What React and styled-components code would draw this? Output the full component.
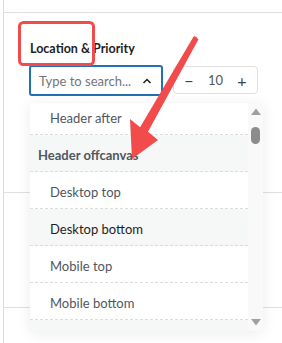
import React from 'react';
import styled, { createGlobalStyle } from 'styled-components';

const Global = createGlobalStyle`
  html, body {
    margin: 0;
    padding: 0;
    background: #fff;
  }
  body {
    font-family: Lato, "Noto Sans", Arial, sans-serif;
    -webkit-font-smoothing: antialiased;
  }
`;

const options = [
  { id: 1, label: 'Header after' },
  { id: 2, label: 'Header offcanvas', group: true },
  { id: 3, label: 'Desktop top' },
  { id: 4, label: 'Desktop bottom', hover: true },
  { id: 5, label: 'Mobile top' },
  { id: 6, label: 'Mobile bottom' },
];

const App = () => {
  return (
    <Frame>
      <Global />
      <Sidebar>
        <TopStrip />
        <Section $height={180}>
          <Label>Location &amp; Priority</Label>
          <Controls>
            <SearchSelect>
              <Placeholder>Type to search...</Placeholder>
              <svg width="10" height="6" viewBox="0 0 10 6">
                <path d="M1.5 5 L5 1.5 L8.5 5" fill="none" stroke="#1e1e1e" strokeWidth="1.5" />
              </svg>
            </SearchSelect>
            <Stepper>
              <StepButton>−</StepButton>
              <StepValue>10</StepValue>
              <StepButton>+</StepButton>
            </Stepper>
          </Controls>
        </Section>
        <Section $height={115} />
        <Section />
      </Sidebar>

      <Dropdown>
        <OptionList>
          <Scroller>
            {options.map((opt) => (
              <Option key={opt.id} $group={opt.group} $hover={opt.hover}>
                {opt.label}
              </Option>
            ))}
          </Scroller>
        </OptionList>
        <ScrollTrack>
          <svg width="10" height="7" viewBox="0 0 10 7">
            <path d="M0 7 L5 0.5 L10 7 Z" fill="#a0a0a0" />
          </svg>
          <Thumb />
          <TrackSpacer />
          <svg width="10" height="7" viewBox="0 0 10 7">
            <path d="M0 0 L10 0 L5 6.5 Z" fill="#a0a0a0" />
          </svg>
        </ScrollTrack>
      </Dropdown>

      <Annotation width="282" height="343" viewBox="0 0 282 343">
        <rect x="19.5" y="22.5" width="74" height="42" rx="4" fill="none" stroke="#f24b4b" strokeWidth="3" />
        <path
          d="M193.6 36.4 Q196 35.5 198.4 39.6 L148 131.7 L158 140 L132 159 L130 119 L140.1 127.3 Z"
          fill="#f24b4b"
        />
      </Annotation>
    </Frame>
  );
};

export default App;

const Frame = styled.div`
  position: relative;
  width: 282px;
  height: 343px;
  overflow: hidden;
  background: #fff;
`;

const Sidebar = styled.div`
  margin-left: 3px;
  height: 100%;
  border-left: 1px solid #dcdcde;
  display: flex;
  flex-direction: column;
`;

const TopStrip = styled.div`
  height: 12px;
  flex-shrink: 0;
  border-bottom: 1px solid #e0e0e0;
`;

const Section = styled.div`
  box-sizing: border-box;
  flex: ${(p) => (p.$height ? `0 0 ${p.$height}px` : '1')};
  padding: 28px 0 0 25px;
  border-bottom: ${(p) => (p.$height ? '1px solid #e0e0e0' : 'none')};
`;

const Label = styled.div`
  font-size: 12.5px;
  line-height: 16px;
  font-weight: 700;
  color: #1e1e1e;
  padding-left: 1px;
  margin-bottom: 8px;
`;

const Controls = styled.div`
  display: flex;
  align-items: flex-start;
  gap: 10px;
`;

const SearchSelect = styled.div`
  box-sizing: border-box;
  width: 134px;
  height: 31px;
  border: 2px solid #2271b1;
  border-radius: 3px;
  display: flex;
  align-items: center;
  justify-content: space-between;
  padding: 1px 9px 0 8px;
`;

const Placeholder = styled.span`
  font-size: 13px;
  color: #757575;
  white-space: nowrap;
`;

const Stepper = styled.div`
  box-sizing: border-box;
  margin-top: 1px;
  width: 85px;
  height: 28px;
  border: 1px solid #e0e0e0;
  border-radius: 4px;
  display: flex;
  align-items: center;
  justify-content: space-between;
  padding: 0 8px;
`;

const StepButton = styled.span`
  font-size: 16px;
  color: #3c434a;
  width: 14px;
  text-align: center;
`;

const StepValue = styled.span`
  font-size: 13px;
  color: #50575e;
`;

const Dropdown = styled.div`
  position: absolute;
  left: 30px;
  top: 103px;
  width: 233px;
  height: 228px;
  display: flex;
  background: #f6f7f7;
  box-shadow: 0 2px 14px rgba(0, 0, 0, 0.08);
`;

const OptionList = styled.div`
  flex: 1;
  overflow: hidden;
`;

const Scroller = styled.div`
  margin-top: -5px;
`;

const Option = styled.div`
  box-sizing: border-box;
  height: 37px;
  display: flex;
  align-items: center;
  padding: 3px 0 0 ${(p) => (p.$group ? '8px' : '20px')};
  border-bottom: 1px dashed #dcdcde;
  background: ${(p) => (p.$group || p.$hover ? '#f6f7f7' : '#fff')};
  font-size: 13px;
  font-weight: ${(p) => (p.$group ? 700 : 400)};
  color: ${(p) => (p.$hover ? '#1e1e1e' : '#50575e')};
  white-space: nowrap;
`;

const ScrollTrack = styled.div`
  width: 15px;
  flex-shrink: 0;
  background: #f9f9f9;
  display: flex;
  flex-direction: column;
  align-items: center;
  padding: 5px 0 5px;
  box-sizing: border-box;
`;

const Thumb = styled.div`
  width: 9px;
  height: 17px;
  margin-top: 12px;
  border-radius: 5px;
  background: #8c8c8c;
`;

const TrackSpacer = styled.div`
  flex: 1;
`;

const Annotation = styled.svg`
  position: absolute;
  left: 0;
  top: 0;
  pointer-events: none;
`;
